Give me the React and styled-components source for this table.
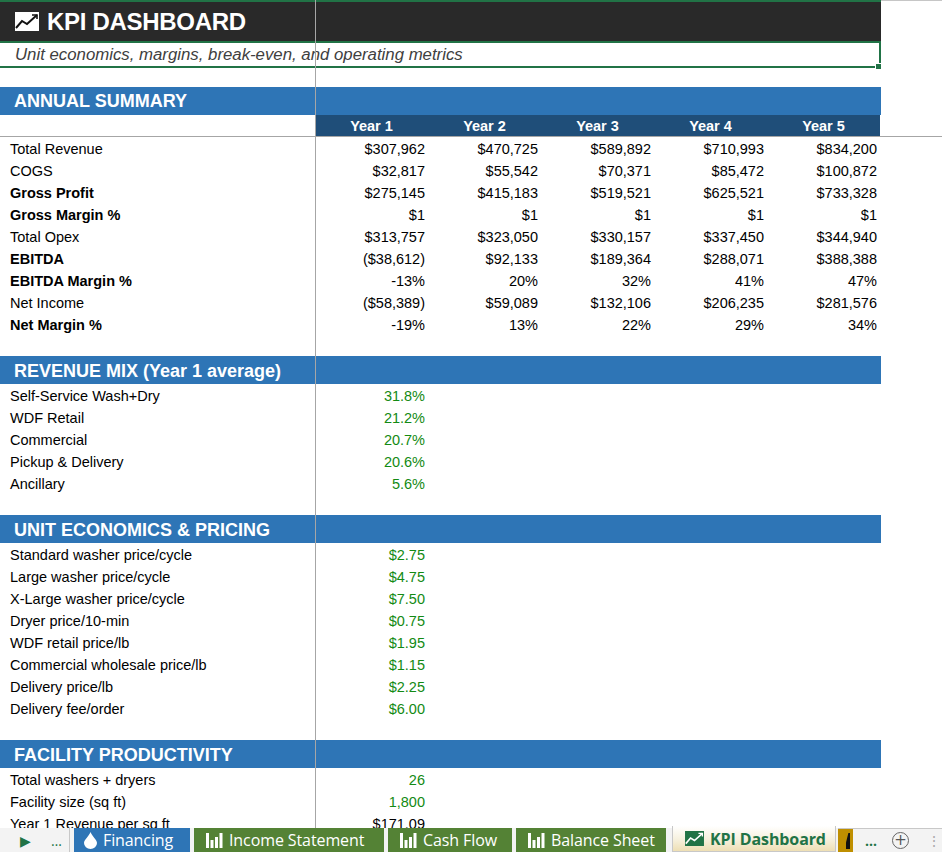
import React from 'react';
import styled, { createGlobalStyle } from 'styled-components';

const GlobalStyle = createGlobalStyle`
  html, body {
    margin: 0;
    padding: 0;
    height: 852px;
    overflow: hidden;
    background: #ffffff;
    font-family: 'Liberation Sans', Arial, sans-serif;
  }
`;

const Page = styled.div`
  display: flex;
  flex-direction: column;
  width: 942px;
  height: 852px;
`;

const Sheet = styled.div`
  position: relative;
  flex: 1;
  overflow: hidden;
  background: #ffffff;
`;

const FreezeV = styled.div`
  position: absolute;
  left: 315px;
  top: 0;
  bottom: 0;
  width: 1px;
  background: #a6a6a6;
`;

const TopLine = styled.div`
  display: flex;
  height: 2px;

  div:first-child {
    width: 881px;
    background: #217346;
  }
  div:last-child {
    flex: 1;
    border-top: 1px solid #c6c6c6;
  }
`;

const TitleBar = styled.div`
  width: 881px;
  height: 39px;
  background: #292929;
  display: flex;
  align-items: center;
  gap: 8px;
  padding-left: 15px;
  box-sizing: border-box;
`;

const Title = styled.h1`
  margin: 0;
  font-size: 24px;
  font-weight: bold;
  color: #ffffff;
  letter-spacing: -0.3px;
`;

const Subtitle = styled.div`
  position: relative;
  width: 881px;
  height: 27px;
  box-sizing: border-box;
  border: 2px solid #217346;
  border-left: none;
  display: flex;
  align-items: center;
  padding-left: 15px;
  padding-top: 1px;
  font-size: 16.8px;
  font-style: italic;
  color: #404040;

  &::after {
    content: '';
    position: absolute;
    right: -3px;
    bottom: -4px;
    width: 5px;
    height: 5px;
    background: #217346;
    border: 1px solid #ffffff;
  }
`;

const Spacer = styled.div`
  height: ${({ h }) => h || 21}px;
`;

const SectionHeader = styled.div`
  width: 881px;
  height: 28px;
  background: #2e75b6;
  color: #ffffff;
  font-size: 18px;
  font-weight: bold;
  display: flex;
  align-items: center;
  padding-left: 14px;
  padding-top: ${({ nudge }) => (nudge ? 0 : 2)}px;
  box-sizing: border-box;
`;

const Grid = styled.div`
  display: grid;
  grid-template-columns: 315px repeat(5, 113px);
  height: 22px;
  box-sizing: border-box;
  padding-top: 2px;
  align-items: center;
  font-size: 14.5px;
`;

const YearRow = styled.div`
  display: grid;
  grid-template-columns: 315px repeat(5, 113px) 1fr;
  height: 21px;
  font-size: 14.5px;
  border-bottom: 1px solid #a6a6a6;
`;

const YearCell = styled.div`
  background: ${({ blank }) => (blank ? 'transparent' : '#1f4e79')};
  color: #ffffff;
  font-weight: bold;
  display: flex;
  align-items: center;
  justify-content: center;
`;

const Label = styled.div`
  padding-left: 10px;
  color: #000000;
  font-weight: ${({ bold }) => (bold ? 'bold' : 'normal')};
  white-space: nowrap;
`;

const Value = styled.div`
  text-align: right;
  padding-right: 3px;
  color: ${({ input }) => (input ? '#138a13' : '#000000')};
  white-space: nowrap;
`;

const TabBar = styled.div`
  height: 24px;
  display: flex;
  align-items: stretch;
  background: #f3f3f3;
  font-family: 'Open Sans', 'Noto Sans', sans-serif;
  font-size: 16px;
  position: relative;
`;

const NavArea = styled.div`
  width: 70px;
  display: flex;
  align-items: center;
  gap: 20px;
  padding-left: 20px;
  box-sizing: border-box;
  color: #217346;
  font-size: 14px;
  border-right: 1px solid #c8c8c8;
`;

const Tab = styled.div`
  display: flex;
  align-items: center;
  gap: 6px;
  width: ${({ w }) => w}px;
  box-sizing: border-box;
  padding-left: ${({ pl }) => pl || 12}px;
  margin-left: 4px;
  background: ${({ bg }) => bg};
  color: #ffffff;
  white-space: nowrap;
  overflow: hidden;
  letter-spacing: -0.1px;
`;

const ActiveTab = styled(Tab)`
  margin-top: -2px;
  background: linear-gradient(#ffffff, #f6f0dc 55%, #eedfb4);
  color: #217346;
  font-weight: bold;
  border: 1px solid #c8c8c8;
  border-top: none;
  margin-left: 6px;
`;

const TabTail = styled.div`
  flex: 1;
  display: flex;
  align-items: center;
  border-top: 1px solid #c8c8c8;
  margin-left: 2px;
  color: #217346;
`;

const GoldStub = styled.div`
  width: 15px;
  height: 100%;
  background: #bf8f00;
  position: relative;

  &::after {
    content: '';
    position: absolute;
    left: 8px;
    top: 4px;
    width: 4px;
    height: 16px;
    background: #111;
    clip-path: polygon(60% 0, 100% 0, 100% 100%, 0 100%, 0 60%);
  }
`;

const More = styled.span`
  margin-left: 12px;
  font-size: 14px;
  font-weight: bold;
  letter-spacing: 1px;
`;

const PlusBtn = styled.span`
  margin-left: 14px;
  width: 15px;
  height: 15px;
  border: 1.5px solid #666;
  border-radius: 50%;
  display: flex;
  align-items: center;
  justify-content: center;
  color: #555;
  font-size: 15px;
  line-height: 1;
  font-family: 'DejaVu Sans', sans-serif;
`;

const Dots = styled.span`
  margin-left: 18px;
  color: #aaa;
  font-size: 14px;
`;

const ChartIcon = ({ bg = '#ffffff', stroke = '#111111', w = 24, h = 19 }) => (
  <svg width={w} height={h} viewBox="0 0 24 19">
    <rect x="0" y="0" width="24" height="19" fill={bg} />
    <polyline points="1,16 7,9 12,12 22,3" fill="none" stroke={stroke} strokeWidth="2" />
    <polyline points="17,3 22,3 22,7" fill="none" stroke={stroke} strokeWidth="1.6" />
  </svg>
);

const BarsIcon = () => (
  <svg width="17" height="16" viewBox="0 0 17 16">
    <rect x="0" y="1" width="3" height="15" fill="#fff" />
    <rect x="4.5" y="8" width="3" height="8" fill="#fff" />
    <rect x="9" y="5" width="3" height="11" fill="#fff" />
    <rect x="13.5" y="1" width="3" height="15" fill="#fff" />
  </svg>
);

const DropIcon = () => (
  <svg width="13" height="17" viewBox="0 0 13 17">
    <path d="M6.5 0 C8 4 13 8 13 11 A6.5 6 0 0 1 0 11 C0 8 5 4 6.5 0 Z" fill="#fff" />
  </svg>
);

const summary = [
  ['Total Revenue', false, ['$307,962', '$470,725', '$589,892', '$710,993', '$834,200']],
  ['COGS', false, ['$32,817', '$55,542', '$70,371', '$85,472', '$100,872']],
  ['Gross Profit', true, ['$275,145', '$415,183', '$519,521', '$625,521', '$733,328']],
  ['Gross Margin %', true, ['$1', '$1', '$1', '$1', '$1']],
  ['Total Opex', false, ['$313,757', '$323,050', '$330,157', '$337,450', '$344,940']],
  ['EBITDA', true, ['($38,612)', '$92,133', '$189,364', '$288,071', '$388,388']],
  ['EBITDA Margin %', true, ['-13%', '20%', '32%', '41%', '47%']],
  ['Net Income', false, ['($58,389)', '$59,089', '$132,106', '$206,235', '$281,576']],
  ['Net Margin %', true, ['-19%', '13%', '22%', '29%', '34%']],
];

const revenueMix = [
  ['Self-Service Wash+Dry', '31.8%'],
  ['WDF Retail', '21.2%'],
  ['Commercial', '20.7%'],
  ['Pickup & Delivery', '20.6%'],
  ['Ancillary', '5.6%'],
];

const pricing = [
  ['Standard washer price/cycle', '$2.75'],
  ['Large washer price/cycle', '$4.75'],
  ['X-Large washer price/cycle', '$7.50'],
  ['Dryer price/10-min', '$0.75'],
  ['WDF retail price/lb', '$1.95'],
  ['Commercial wholesale price/lb', '$1.15'],
  ['Delivery price/lb', '$2.25'],
  ['Delivery fee/order', '$6.00'],
];

const facility = [
  ['Total washers + dryers', '26', true],
  ['Facility size (sq ft)', '1,800', true],
  ['Year 1 Revenue per sq ft', '$171.09', false],
];

const SingleRows = ({ rows, input = true }) =>
  rows.map(([label, value, inp]) => (
    <Grid key={label}>
      <Label>{label}</Label>
      <Value input={inp === undefined ? input : inp}>{value}</Value>
    </Grid>
  ));

export default function App() {
  return (
    <Page>
      <GlobalStyle />
      <Sheet>
        <TopLine>
          <div />
          <div />
        </TopLine>
        <TitleBar>
          <ChartIcon />
          <Title>KPI DASHBOARD</Title>
        </TitleBar>
        <Subtitle>Unit economics, margins, break-even, and operating metrics</Subtitle>
        <Spacer h={19} />
        <SectionHeader nudge>ANNUAL SUMMARY</SectionHeader>
        <YearRow>
          <YearCell blank />
          {['Year 1', 'Year 2', 'Year 3', 'Year 4', 'Year 5'].map((y) => (
            <YearCell key={y}>{y}</YearCell>
          ))}
          <YearCell blank />
        </YearRow>
        {summary.map(([label, bold, vals]) => (
          <Grid key={label}>
            <Label bold={bold}>{label}</Label>
            {vals.map((v, i) => (
              <Value key={i}>{v}</Value>
            ))}
          </Grid>
        ))}
        <Spacer />
        <SectionHeader>REVENUE MIX (Year 1 average)</SectionHeader>
        <SingleRows rows={revenueMix} />
        <Spacer />
        <SectionHeader>UNIT ECONOMICS &amp; PRICING</SectionHeader>
        <SingleRows rows={pricing} />
        <Spacer />
        <SectionHeader>FACILITY PRODUCTIVITY</SectionHeader>
        <SingleRows rows={facility} />
        <FreezeV />
      </Sheet>
      <TabBar>
        <NavArea>
          <span>▶</span>
          <span>…</span>
        </NavArea>
        <Tab w={116} bg="#2e75b6" pl={10}>
          <DropIcon />
          Financing
        </Tab>
        <Tab w={190} bg="#548235">
          <BarsIcon />
          Income Statement
        </Tab>
        <Tab w={124} bg="#548235">
          <BarsIcon />
          Cash Flow
        </Tab>
        <Tab w={150} bg="#548235">
          <BarsIcon />
          Balance Sheet
        </Tab>
        <ActiveTab w={164}>
          <ChartIcon bg="#217346" stroke="#ffffff" w={19} h={15} />
          KPI Dashboard
        </ActiveTab>
        <TabTail>
          <GoldStub />
          <More>…</More>
          <PlusBtn>+</PlusBtn>
          <Dots>⋮</Dots>
        </TabTail>
      </TabBar>
    </Page>
  );
}
